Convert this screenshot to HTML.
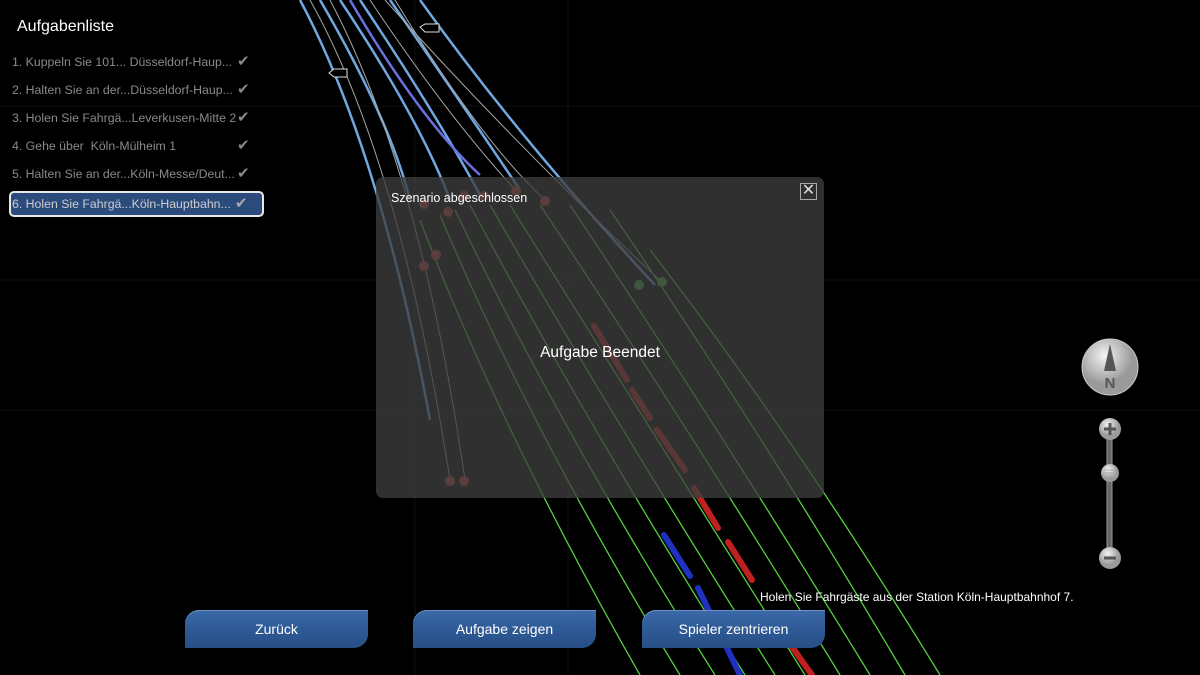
<!DOCTYPE html>
<html><head><meta charset="utf-8"><style>
body{margin:0;width:1200px;height:675px;background:#000;overflow:hidden;position:relative;font-family:"Liberation Sans",sans-serif}
svg.map{position:absolute;left:0;top:0}
.title{position:absolute;left:17px;top:18px;color:#fff;font-size:16px}
.item{position:absolute;left:12px;width:250px;color:#8a8a8a;font-size:12.3px;height:22px;line-height:22px}
.item .ck{position:absolute;left:225px;top:0;color:#888;font-size:15px}
.sel{left:9px;width:250px;background:#2b4b7c;border:2px solid #e8e8e8;border-radius:5px;color:#ccc;top:191px;padding-left:1px}
.dlg{position:absolute;left:376px;top:177px;width:448px;height:321px;background:rgba(62,62,62,0.78);border-radius:7px}
.btn{position:absolute;top:610px;width:183px;height:38px;border-radius:14px 0 14px 0;background:linear-gradient(#3d6aa8,#2e5a96 50%,#284f86);color:#fff;font-size:14px;text-align:center;line-height:38px;box-shadow:inset 0 1px 0 #6d93c8}
</style></head><body>
<svg class="map" width="1200" height="675">
<g stroke="#101010" stroke-width="1">
<line x1="415" y1="0" x2="415" y2="675"/><line x1="568" y1="0" x2="568" y2="675"/><line x1="0" y1="106" x2="1200" y2="106"/><line x1="0" y1="410" x2="1200" y2="410"/><line x1="0" y1="280" x2="1200" y2="280"/>
</g>
<g stroke="#55d040" stroke-width="1.3" fill="none">
<path d="M420 220 Q500 430 640 675"/>
<path d="M440 215 Q530 430 680 675"/>
<path d="M455 210 Q560 430 715 675"/>
<path d="M470 205 Q590 430 745 675"/>
<path d="M490 205 Q620 430 775 675"/>
<path d="M510 205 Q650 430 805 675"/>
<path d="M540 205 Q690 430 840 675"/>
<path d="M570 205 Q720 430 870 675"/>
<path d="M610 210 Q760 430 905 675"/>
<path d="M650 250 Q790 430 940 675"/>
</g>
<g stroke="#6fa8e0" stroke-width="2.5" fill="none">
<path d="M300 0 Q380 150 430 420"/>
<path d="M320 0 Q390 120 410 200"/>
<path d="M340 0 Q420 120 450 200"/>
<path d="M360 0 Q440 120 480 195"/>
<path d="M390 0 Q480 130 520 190"/>
<path d="M420 0 Q520 140 655 285"/>
</g>
<path d="M350 0 Q420 120 480 175" stroke="#6a70e0" stroke-width="2.5" fill="none"/>
<g stroke="#a8a8a8" stroke-width="1" fill="none">
<path d="M310 0 Q400 160 450 480"/><path d="M330 0 Q420 170 465 480"/><path d="M370 0 Q450 120 520 195"/><path d="M385 0 Q520 150 665 285"/><path d="M395 0 Q480 140 545 200"/>
</g>
<g fill="#c04040"><circle cx="424" cy="204" r="5"/><circle cx="448" cy="212" r="5"/><circle cx="464" cy="196" r="5"/><circle cx="484" cy="196" r="5"/><circle cx="516" cy="191" r="5"/><circle cx="545" cy="201" r="5"/><circle cx="436" cy="255" r="5"/><circle cx="424" cy="266" r="5"/><circle cx="450" cy="481" r="5"/><circle cx="464" cy="481" r="5"/></g>
<g fill="#40b040"><circle cx="639" cy="285" r="5"/><circle cx="662" cy="282" r="5"/></g>
<g stroke="#c02020" stroke-width="6" stroke-linecap="round"><line x1="594" y1="326" x2="627" y2="380"/><line x1="632" y1="390" x2="650" y2="418"/><line x1="657" y1="430" x2="685" y2="470"/><line x1="694" y1="488" x2="718" y2="528"/><line x1="728" y1="542" x2="752" y2="580"/><line x1="780" y1="630" x2="812" y2="675"/></g>
<g stroke="#2030c0" stroke-width="6" stroke-linecap="round"><line x1="664" y1="535" x2="690" y2="576"/><line x1="698" y1="588" x2="740" y2="675"/></g>
<g fill="#000" stroke="#ddd" stroke-width="1"><path d="M420 27 L425 24 L439 24 L439 32 L425 32 Z"/><path d="M329 73 L334 69 L347 69 L347 77 L334 77 Z"/></g>
</svg>
<div class="title">Aufgabenliste</div>
<div class="item" style="top:51px">1. Kuppeln Sie 101... Düsseldorf-Haup...<span class="ck">✔</span></div>
<div class="item" style="top:79px">2. Halten Sie an der...Düsseldorf-Haup...<span class="ck">✔</span></div>
<div class="item" style="top:107px">3. Holen Sie Fahrgä...Leverkusen-Mitte 2<span class="ck">✔</span></div>
<div class="item" style="top:135px">4. Gehe über&nbsp; Köln-Mülheim 1<span class="ck">✔</span></div>
<div class="item" style="top:163px">5. Halten Sie an der...Köln-Messe/Deut...<span class="ck">✔</span></div>
<div class="item sel">6. Holen Sie Fahrgä...Köln-Hauptbahn...<span class="ck" style="left:224px;color:#aaa">✔</span></div>
<div class="dlg">
<div style="position:absolute;left:15px;top:14px;color:#fff;font-size:12.5px">Szenario abgeschlossen</div>
<div style="position:absolute;left:424px;top:6px;width:15px;height:15px;border:1px solid #aaa;color:#ddd;font-size:16px;line-height:14px;text-align:center">✕</div>
<div style="position:absolute;left:0;width:448px;top:167px;text-align:center;color:#fff;font-size:15.5px">Aufgabe Beendet</div>
</div>
<div style="position:absolute;left:760px;top:590px;color:#fff;font-size:12px">Holen Sie Fahrgäste aus der Station Köln-Hauptbahnhof 7.</div>
<div class="btn" style="left:185px">Zurück</div>
<div class="btn" style="left:413px">Aufgabe zeigen</div>
<div class="btn" style="left:642px">Spieler zentrieren</div>
<svg style="position:absolute;left:1080px;top:336px" width="62" height="240">
<defs><radialGradient id="g" cx="40%" cy="30%"><stop offset="0" stop-color="#f4f4f4"/><stop offset="1" stop-color="#9a9a9a"/></radialGradient></defs>
<circle cx="30" cy="31" r="28" fill="url(#g)" stroke="#ccc"/>
<path d="M30 8 L24 35 L36 35 Z" fill="#555"/>
<text x="30" y="52" text-anchor="middle" font-family="Liberation Sans" font-weight="bold" font-size="15" fill="#555">N</text>
<rect x="27" y="100" width="5" height="122" fill="#666" stroke="#999"/>
<circle cx="30" cy="93" r="11" fill="url(#g)"/><path d="M24 93 H36 M30 87 V99" stroke="#555" stroke-width="3"/>
<circle cx="30" cy="137" r="9" fill="url(#g)"/><path d="M24 134 H36 M24 137 H36 M24 140 H36" stroke="#aaa"/>
<circle cx="30" cy="222" r="11" fill="url(#g)"/><path d="M24 222 H36" stroke="#555" stroke-width="3"/>
</svg>
</body></html>
